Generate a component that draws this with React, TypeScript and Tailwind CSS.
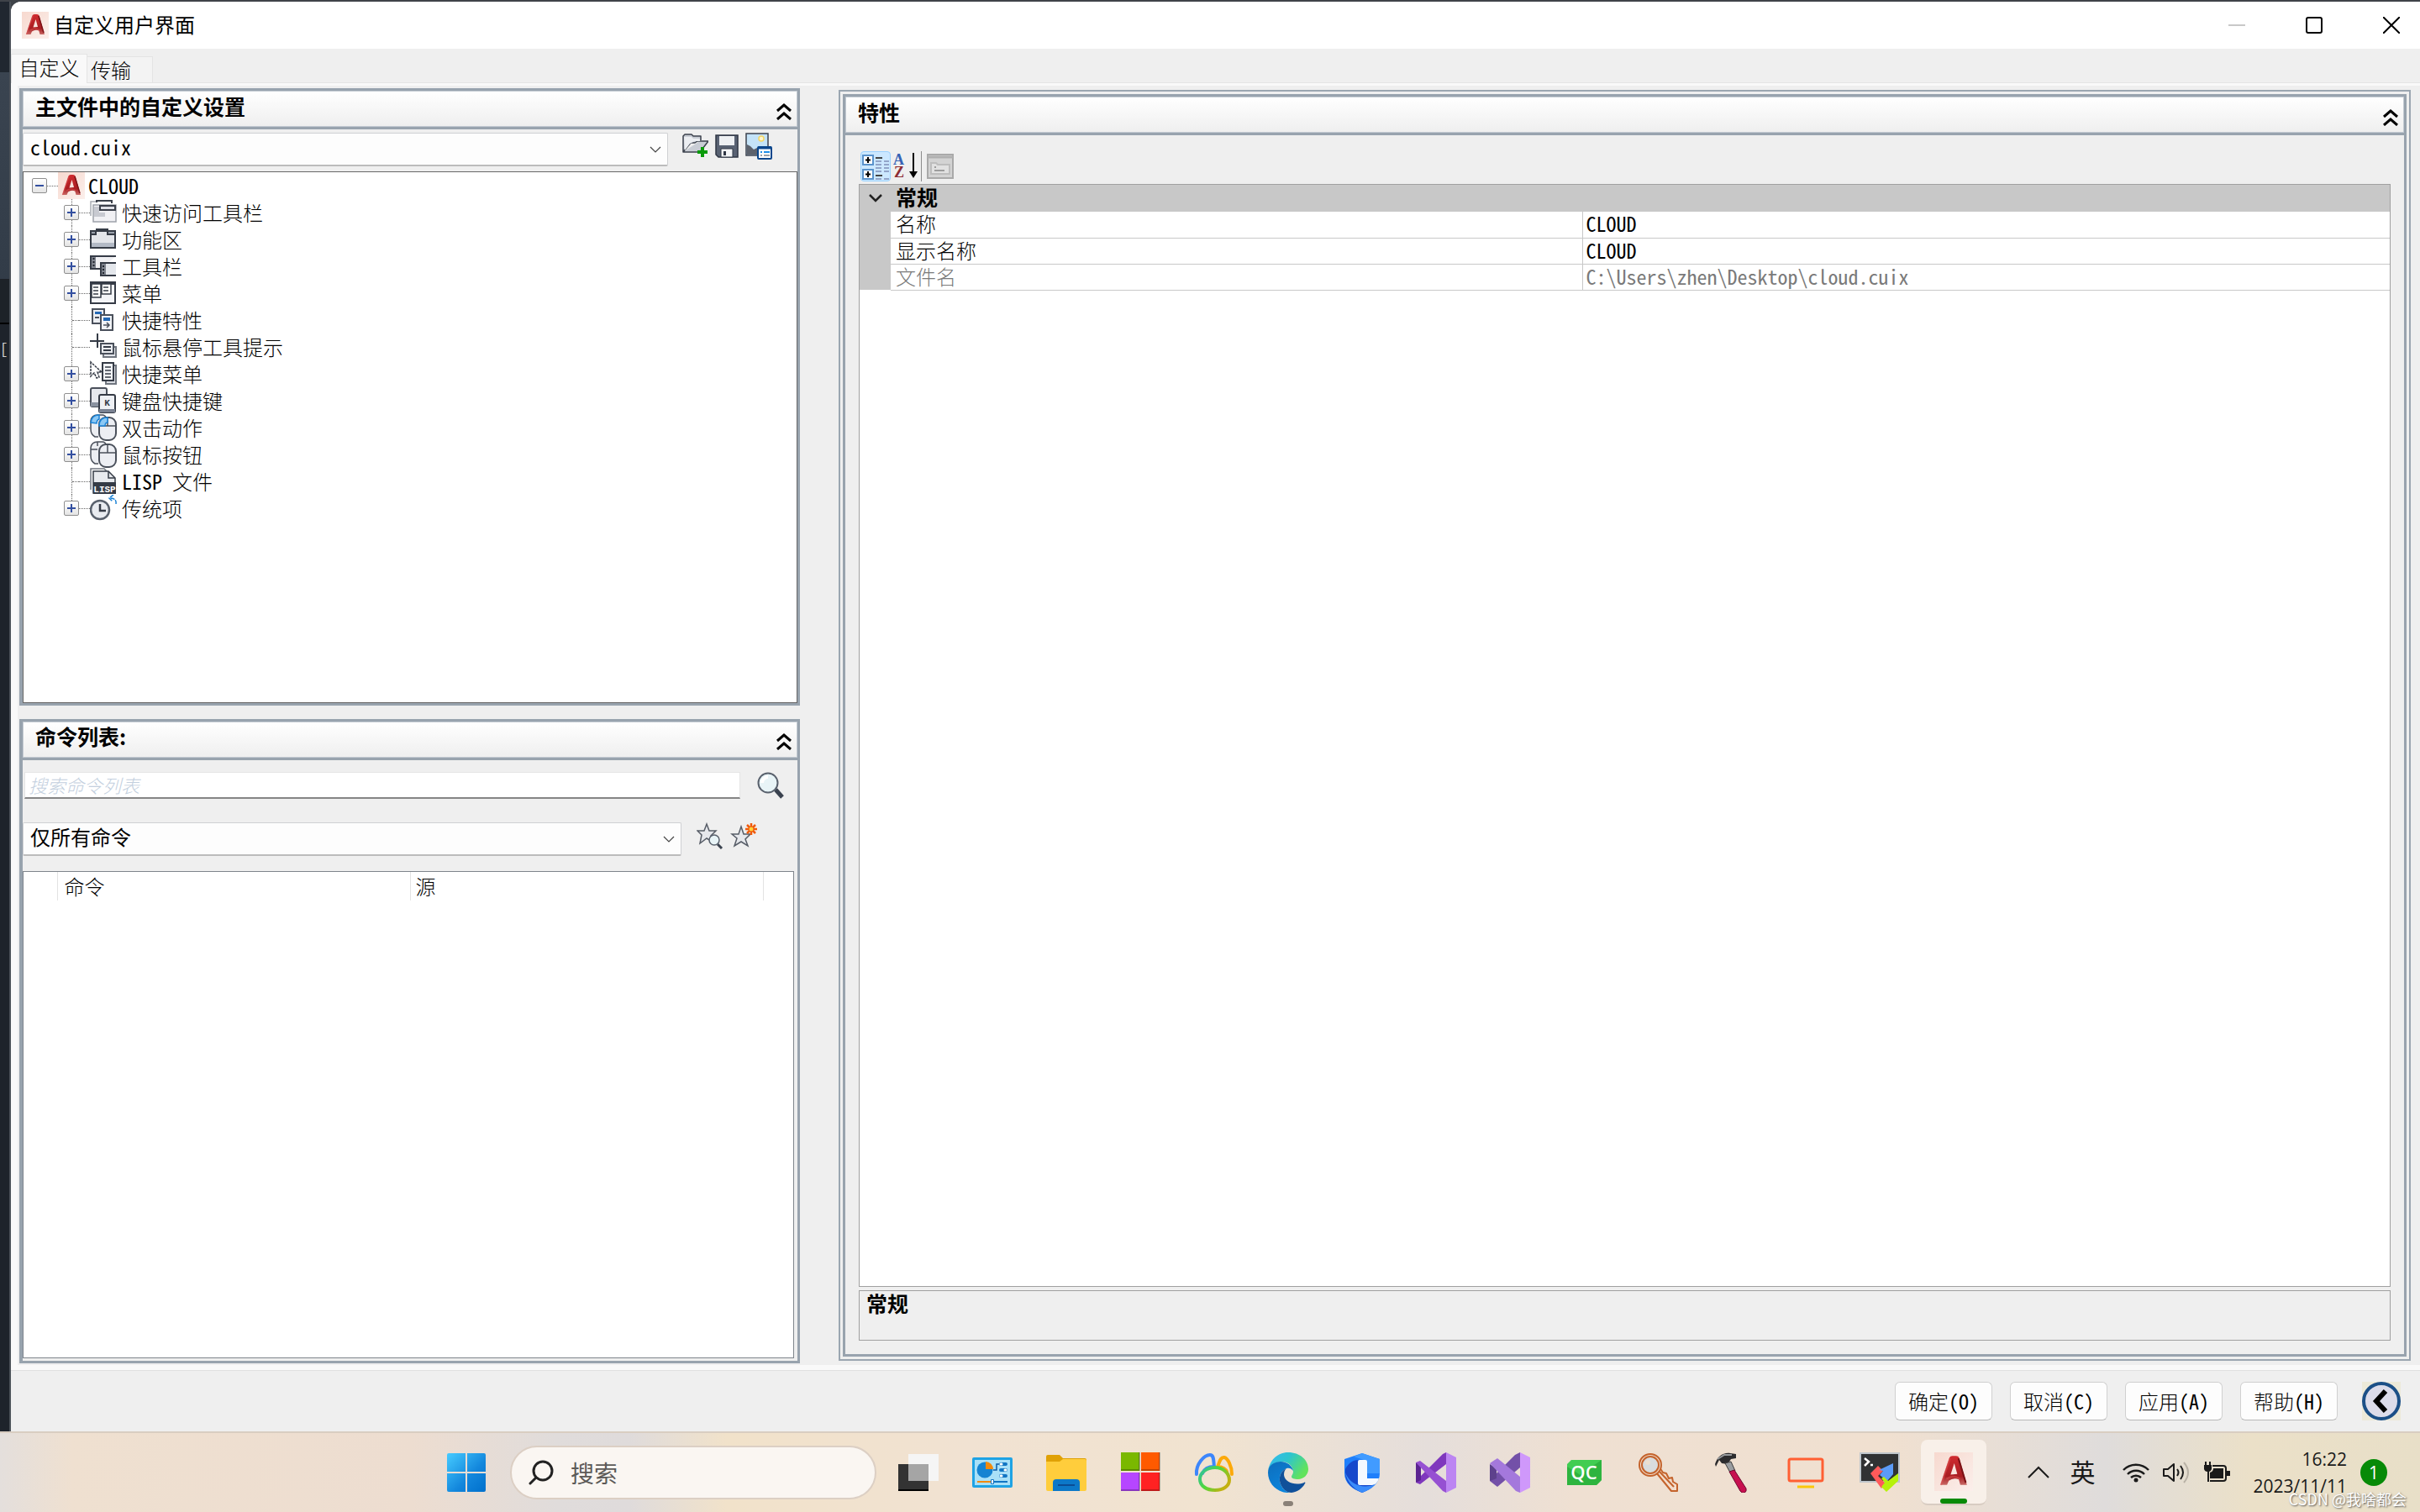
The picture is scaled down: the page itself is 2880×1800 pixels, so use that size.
import { ReactNode, useState } from "react"

type IconProps = { className?: string }

type TreeItemType = {
  name: ReactNode
  icon: ReactNode
  leaf?: boolean
}

type TaskType = {
  name: string
  icon: ReactNode
  running?: boolean
}

const Mono = ({ children }: { children: ReactNode }) => (
  <span className="font-['Noto_Sans_Mono_CJK_SC','Liberation_Mono',monospace] font-normal">{children}</span>
)

/* Logos and small drawings */

const AcadIcon = ({ className = "size-8" }: IconProps) => (
  <svg viewBox="0 0 32 32" className={className}>
    <defs>
      <linearGradient id="acadBg" x1="0" y1="0" x2="1" y2="1">
        <stop offset="0" stopColor="#f7d9cf" />
        <stop offset="1" stopColor="#fbefeb" />
      </linearGradient>
      <linearGradient id="acadRed" x1="0" y1="0" x2="0" y2="1">
        <stop offset="0" stopColor="#d02c30" />
        <stop offset="0.7" stopColor="#a91d22" />
        <stop offset="1" stopColor="#c86a66" />
      </linearGradient>
    </defs>
    <rect width="32" height="32" fill="url(#acadBg)" />
    <path d="M5 27 12.5 4.5Q13 3 15 3h3q2 0 2.500 1.500L27 27h-5.500l-1.200-4.500Q16 20.500 12 23.500L10.500 27Z M13.500 18.500l5.500-.6L16.500 9Z" fill="url(#acadRed)" fillRule="evenodd" />
    <path d="M13 5 5.500 27M10 22q6-4 11 0" stroke="#e0525280" strokeWidth="1.500" fill="none" />
    <path d="m20 5 6 20" stroke="#7c1216" strokeWidth="1.500" fill="none" />
  </svg>
)

const DoubleUp = () => (
  <svg viewBox="0 0 18 20" className="w-[18px] h-5" fill="none" stroke="#000" strokeWidth="3">
    <path d="m1 9 8-7 8 7M1 19l8-7 8 7" />
  </svg>
)

const Chevron = () => (
  <svg viewBox="0 0 14 8" className="w-3.5 h-2" fill="none" stroke="#444" strokeWidth="1.200">
    <path d="m1 1 6 6 6-6" />
  </svg>
)

const FolderAddIcon = () => (
  <svg viewBox="0 0 32 32" className="size-8">
    <path d="M2 23V4l2-2h8l2 2h9v5M2 23h20l10-13H19l-3 2H11Z" fill="#c9cdd5" stroke="#3c424d" strokeWidth="1.500" strokeLinejoin="round" />
    <path d="M3 5h9l2 2h8v3h-6l-6 3-6 8Z" fill="#eceef2" />
    <path d="M25 17v12M19 23h12" stroke="#0a9a0a" strokeWidth="4" />
  </svg>
)

const SaveIcon = () => (
  <svg viewBox="0 0 28 28" className="size-7">
    <path d="M1 1h26v26H4l-3-3Z" fill="#596273" stroke="#2f3644" strokeWidth="1.500" />
    <path d="M5 2h18v11H5Z" fill="#eef0f3" />
    <path d="M7 17h14v10H7Z" fill="#f4f5f7" stroke="#2f3644" />
    <path d="M10 20h3v5h-3Z" fill="#2f3644" />
  </svg>
)

const PictureListIcon = () => (
  <svg viewBox="0 0 32 32" className="size-8">
    <path d="M1 1h26v26H1Z" fill="#c4e3f8" stroke="#3c424d" strokeWidth="1.500" />
    <path d="M2 26V14l4 2 4 4 4-2v8Z" fill="#5c626d" />
    <circle cx="19" cy="7" r="3" fill="#fff6cf" stroke="#f5d765" strokeWidth="1.500" />
    <rect x="15" y="17" width="16" height="14" rx="1" fill="#fff" stroke="#0a468c" strokeWidth="2" />
    <path d="M15 18h16" stroke="#0a468c" strokeWidth="3" />
    <path d="M18 23h2M22 23h7" stroke="#1f8fe8" strokeWidth="2" />
    <path d="M18 27h2M22 27h7" stroke="#9aa1aa" strokeWidth="2" />
  </svg>
)

const GlassIcon = () => (
  <svg viewBox="0 0 32 32" className="size-8">
    <path d="m22 21 8 9" stroke="#3a424f" strokeWidth="5" />
    <circle cx="13" cy="13" r="11.500" fill="#e8f4f7" stroke="#59616d" strokeWidth="2" />
    <path d="M6 13a7 7 0 0 1 7-7" stroke="#fff" strokeWidth="4" fill="none" />
  </svg>
)

const StarFindIcon = () => (
  <svg viewBox="0 0 32 32" className="size-8">
    <path d="m12 2 3 8h8l-6 6 3 8-8-5-8 6 2-10-5-5h8Z" fill="#e6e8ec" stroke="#575d67" strokeWidth="1.500" />
    <path d="m25 26 5 5" stroke="#3a424f" strokeWidth="3" />
    <circle cx="21" cy="21" r="6" fill="#e8f4f7" stroke="#59616d" strokeWidth="1.500" />
  </svg>
)

const StarNewIcon = () => (
  <svg viewBox="0 0 32 32" className="size-8">
    <path d="m13 5 3 9h8l-6 6 3 8-8-5-8 5 3-9-6-5h8Z" fill="#e6e8ec" stroke="#575d67" strokeWidth="1.500" />
    <path d="M25 1v14M18 8h14M20 3l10 10M30 3 20 13" stroke="#f05a0a" strokeWidth="2.500" />
    <circle cx="25" cy="8" r="3" fill="#ffd23a" stroke="#f05a0a" />
  </svg>
)

/* Tree icons, all on a 32 unit grid */

const quickBar = (
  <svg viewBox="0 0 32 32" className="size-8" fill="none">
    <path d="M1 20V3h8" stroke="#a9adb4" strokeWidth="1.500" />
    <path d="M8 4V2h18v3" stroke="#3b404a" strokeWidth="2" />
    <path d="M4 7h27v20H4Z" fill="#f1f1f4" stroke="#9da1a9" strokeWidth="1.500" />
    <path d="M5 9h6v10H5ZM5 16h13v5H5Z" fill="#c8cad1" />
    <path d="M12 8h18v5H12Z" fill="#dfe0e6" stroke="#3b404a" strokeWidth="2" />
  </svg>
)

const ribbon = (
  <svg viewBox="0 0 32 32" className="size-8" fill="none">
    <path d="M1 9V6h7V4h13v2h9v3" fill="#9aa1ac" stroke="#353b46" strokeWidth="2" />
    <path d="M1 10h6V6h14v4h9v16H1Z" fill="#e3e5ea" stroke="#353b46" strokeWidth="2" />
    <path d="M2 20h27v5H2Z" fill="#b3bac6" />
  </svg>
)

const toolbars = (
  <svg viewBox="0 0 32 32" className="size-8" fill="none">
    <path d="M31 4H1v15h12" fill="#f0f0f3" stroke="#353b46" strokeWidth="2" />
    <path d="M2 5h5v13H2ZM13 13h6v14h-6Z" fill="#80858f" />
    <path d="M31 12H13v15h18" stroke="#353b46" strokeWidth="2" />
    <path d="M19 13h12v13H19Z" fill="#e4e7ec" />
    <path d="M4.500 6v11M16 15v11" stroke="#20252e" strokeWidth="2" strokeDasharray="2 2" />
  </svg>
)

const menus = (
  <svg viewBox="0 0 32 32" className="size-8" fill="none">
    <path d="M1 3h29v25H1Z" fill="#f4f5f8" stroke="#353b46" strokeWidth="2" />
    <path d="M1 2h29v4H1Z" fill="#353b46" />
    <path d="M2 5h11v16H2ZM14 5h11v12H14Z" fill="#fff" stroke="#353b46" strokeWidth="1.500" />
    <path d="M4 9h6M4 13h6M4 17h6M16 9h6M16 13h6" stroke="#353b46" strokeWidth="1.500" />
  </svg>
)

const quickProps = (
  <svg viewBox="0 0 32 32" className="size-8" fill="none">
    <path d="M3 3h14v17H3Z" fill="#eceef2" stroke="#4a505b" strokeWidth="2" />
    <path d="M6 6h8v3H6Z" fill="#2468b4" />
    <path d="M6 13h5" stroke="#4a505b" strokeWidth="2" />
    <path d="M13 10h14v18H13Z" fill="#f1f3f6" stroke="#4a505b" strokeWidth="2" />
    <path d="M16 13h8v4h-8Z" fill="#2468b4" />
    <path d="M16 22h7m-3-3 3 3-3 3" stroke="#4a505b" strokeWidth="1.500" />
  </svg>
)

const rollover = (
  <svg viewBox="0 0 32 32" className="size-8" fill="none">
    <path d="M9 0v17M0 9h17" stroke="#353b46" strokeWidth="2" />
    <path d="M16 16h15v12H16Z" fill="#e3e5ea" stroke="#70767f" strokeWidth="2" />
    <path d="M13 12h15v12H13Z" fill="#e9ebef" stroke="#4a505b" strokeWidth="2" />
    <path d="M16 16h9M16 20h9" stroke="#353b46" strokeWidth="2" />
  </svg>
)

const shortcutMenu = (
  <svg viewBox="0 0 32 32" className="size-8" fill="none">
    <path d="M1 2v17l4-4 3 6 3-1-2-6h5Z" fill="#fff" stroke="#353b46" strokeWidth="1.500" strokeDasharray="3 1" />
    <path d="M19 6h12v22H19Z" fill="#d9dce2" stroke="#70767f" strokeWidth="2" />
    <path d="M15 3h13v21H15Z" fill="#f1f3f6" stroke="#353b46" strokeWidth="2" />
    <path d="M18 8h7M18 12h7M18 16h7M18 20h7" stroke="#353b46" strokeWidth="1.500" />
  </svg>
)

const keyboard = (
  <svg viewBox="0 0 32 32" className="size-8" fill="none">
    <rect x="1" y="1" width="19" height="22" rx="2" fill="#e6e8ed" stroke="#4a505b" strokeWidth="2" />
    <path d="M1 18h10v5H1Z" fill="#8a92a0" />
    <rect x="11" y="9" width="19" height="21" rx="2" fill="#eef0f4" stroke="#353b46" strokeWidth="2" />
    <path d="M11 26h19v4H11Z" fill="#7a8292" />
    <text x="20.500" y="22" fontSize="11" fontWeight="700" textAnchor="middle" fill="#353b46" fontFamily="Liberation Mono">K</text>
  </svg>
)

const Mouse = ({ action }: { action?: boolean }) => (
  <svg viewBox="0 0 32 32" className="size-8" fill="none">
    <path d="M10 27H6q-5-3-5-9V8q1-7 8-7h6q3 0 4 3" fill="#eceef2" stroke="#4a505b" strokeWidth="1.500" />
    {action
      ? <path d="M1 10q1-9 10-9v5q-3 1-3 5Z" fill="#8cc8f4" stroke="#1b83d6" strokeWidth="1.500" />
      : <path d="M1 10h8M9 1v5" stroke="#4a505b" strokeWidth="1.500" />}
    <rect x="11" y="4" width="20" height="27" rx="8" fill="#eceef3" stroke="#4a505b" strokeWidth="2" />
    <path d="M11 14h20M21 4v10" stroke="#4a505b" strokeWidth="1.500" />
    {action && <path d="M11 14q0-10 10-10v6q-3 0-3 4Z" fill="#8cc8f4" stroke="#1b83d6" strokeWidth="1.500" />}
  </svg>
)

const lisp = (
  <svg viewBox="0 0 32 32" className="size-8" fill="none">
    <path d="M1 26V1h16l3 3" stroke="#70767f" strokeWidth="1.500" />
    <path d="M4 30V4h18l8 8v18Z" fill="#e8eaee" stroke="#353b46" strokeWidth="1.500" />
    <path d="M22 4v8h8" stroke="#353b46" strokeWidth="1.500" />
    <path d="M4 17h27v14H4Z" fill="#353b46" />
    <text x="17.500" y="29" fontSize="11" fontWeight="700" textAnchor="middle" fill="#fff" fontFamily="Liberation Mono">LISP</text>
  </svg>
)

const legacy = (
  <svg viewBox="0 0 32 32" className="size-8" fill="none">
    <circle cx="12" cy="18" r="11" fill="#e8ebf0" stroke="#59616d" strokeWidth="2.500" />
    <path d="M12 11v8h7" stroke="#353b46" strokeWidth="2.500" />
    <path d="M31 11q1-7-7-7m4-4-5 4 4 4" stroke="#1b83d6" strokeWidth="1.500" strokeDasharray="5 1" />
  </svg>
)

/* Task bar icons, all on a 48 unit grid */

const taskView = (
  <svg viewBox="0 0 48 48" className="size-12">
    <path d="M0 14h36v32H0Z" fill="#333" />
    <path d="M0 44h36v2H0Z" fill="#000" />
    <path d="M12 2h36v32H12Z" fill="#f5f5f5" />
    <path d="M12 14h24v20H12Z" fill="#a5a5a5" />
  </svg>
)

const monitorPanel = (
  <svg viewBox="0 0 48 48" className="size-12">
    <rect y="6" width="48" height="36" rx="2" fill="#1fa3e4" />
    <path d="M3 9h42v30H3Z" fill="#a9e0f8" />
    <circle cx="15" cy="21" r="9.500" fill="#1583d2" />
    <path d="M16 20v-9a9 9 0 0 1 9 9Z" fill="#f28a0c" />
    <path d="M25 21h4v-7h5" stroke="#0a5aa5" strokeWidth="1.500" fill="none" />
    <path d="M34 14h6M34 21h6M34 28h6" stroke="#1275c4" strokeWidth="4" strokeLinecap="round" />
    <path d="M34 14h1M39 21h1M34 28h1" stroke="#fff" strokeWidth="3" strokeLinecap="round" />
    <path d="M6 35h18" stroke="#f28a0c" strokeWidth="2" />
    <path d="M24 35h18" stroke="#1275c4" strokeWidth="2" />
    <path d="M22.500 32.500h3v5h-3Z" fill="#fff" stroke="#1275c4" />
  </svg>
)

const explorer = (
  <svg viewBox="0 0 48 48" className="size-12">
    <path d="M0 5q0-2 2-2h14l4 4h26q2 0 2 2v8H0Z" fill="#e0a106" />
    <path d="M0 11h16l4-3h26q2 0 2 2v34q0 2-2 2H2q-2 0-2-2Z" fill="#ffcd3c" />
    <path d="M8 46V36q0-4 4-4h24q4 0 4 4v10Z" fill="#0c78c8" />
    <path d="M14 39h20" stroke="#0a4c94" strokeWidth="2" />
  </svg>
)

const squares = (
  <svg viewBox="0 0 48 48" className="size-12">
    <path d="M1 0h22v22H1Z" fill="#7ab800" />
    <path d="M25 0h22v22H25Z" fill="#ff5a00" />
    <path d="M1 24h22v22H1Z" fill="#b646ff" />
    <path d="M25 24h22v22H25Z" fill="#ff2222" />
    <path d="M1 21h22V0M25 21h22V0M1 45h22V24M25 45h22V24" stroke="#00000040" strokeWidth="2" fill="none" />
  </svg>
)

const navicat = (
  <svg viewBox="0 0 48 48" className="size-12" fill="none" strokeWidth="4" strokeLinecap="round" strokeLinejoin="round">
    <defs>
      <linearGradient id="navi" x1="0" y1="0" x2="1" y2="0.600">
        <stop offset="0" stopColor="#2fc0a8" />
        <stop offset="0.500" stopColor="#4fd83a" />
        <stop offset="1" stopColor="#c4b010" />
      </linearGradient>
    </defs>
    <path d="M3 26C2 14 12 3 19 3c5 0 4 7 5 14-7 0-12 3-14 8" stroke="#3d86fb" />
    <path d="M45 26c0-10-5-19-9-20-5-1-6 7-8 11 6 0 10 3 11 6" stroke="#fca90a" />
    <path d="M25 18c10 0 17 7 17 15 0 7-7 12-17 12S7 40 7 32s8-14 18-14Z" stroke="url(#navi)" />
  </svg>
)

const edge = (
  <svg viewBox="0 0 48 48" className="size-12">
    <defs>
      <linearGradient id="edgeTop" x1="0" y1="0" x2="1" y2="0.500">
        <stop offset="0" stopColor="#35b8f5" />
        <stop offset="0.500" stopColor="#2fc5cc" />
        <stop offset="1" stopColor="#62e35c" />
      </linearGradient>
      <linearGradient id="edgeLow" x1="0" y1="0" x2="0.500" y2="1">
        <stop offset="0" stopColor="#0e6ebc" />
        <stop offset="1" stopColor="#0a84dc" />
      </linearGradient>
    </defs>
    <path d="M0 22C2 9 12 0 24 0c14 0 24 9 24 20 0 7-6 12-12 12-5 0-8-1-8-3 0-2 2-3 2-6 0-7-6-12-14-12C8 11 2 16 0 22Z" fill="url(#edgeTop)" />
    <path d="M0 24C0 16 7 11 15 11c8 0 14 5 15 11-2-3-5-4-8-3-5 2-9 8-8 15 1 6 5 12 12 14C12 49 0 38 0 24Z" fill="url(#edgeLow)" />
    <path d="M22 19c-5 2-9 8-8 15 1 7 7 14 14 14 7-1 13-5 16-11 1-1 0-2-1-1-10 4-23 0-24-9 0-4 1-6 3-8Z" fill="#10509a" />
  </svg>
)

const shield = (
  <svg viewBox="0 0 48 48" className="size-12">
    <path d="m24 1 21 7v17c0 12-10 19-21 23C13 44 3 37 3 25V8Z" fill="#1f7ffb" />
    <path d="m24 1 21 7v17H26V9L14 5Z" fill="#419bff" />
    <path d="M4 20C8 12 14 9 20 9v29h18c-4 5-9 8-14 10C12 43 4 36 4 25Z" fill="#1648cc" />
    <path d="M4 24c2 11 9 19 20 24 6-2 11-5 14-9-14 4-28 0-34-15Z" fill="#3a8cfa" />
    <path d="M19 11q0-2 2-2h7q2 0 2 2v20h14q-2 7-8 8H21q-2 0-2-2Z" fill="#f4f9ff" />
  </svg>
)

const VisualStudio = ({ preview }: { preview?: boolean }) => (
  <svg viewBox="0 0 48 48" className="size-12">
    <path d={preview ? "m0 34 9 7 27-23V0L30 3 3 30Z" : "m0 36 5 2 31-24V0l-4 2L6 28Z"} fill={preview ? "#7350a8" : "#7f38bd"} />
    <path d={preview ? "M0 14 8 19v12L0 34Z" : "M0 12l6 3v18l-6 3Z"} fill={preview ? "#5d418c" : "#5b2391"} />
    <path d={preview ? "m0 13 9-6 27 22v19l-5-2Z" : "m0 12 5-2 31 24v14l-4-2Z"} fill={preview ? "#a478dc" : "#9650d2"} />
    <path d="m36 0 12 6v36l-12 6Z" fill={preview ? "#cf98fb" : "#bc85f2"} />
  </svg>
)

const qc = (
  <svg viewBox="0 0 48 48" className="size-12">
    <path d="M9 9h36v24l-6 6H4V14Z" fill="#41cd52" />
    <path d="m4 17 35 22H4ZM45 9v24l-6 6-20-12Z" fill="#21a334" opacity="0.600" />
    <text x="24" y="32" fontSize="22" fontWeight="600" textAnchor="middle" fill="#fff" fontFamily="Open Sans">QC</text>
  </svg>
)

const keyIcon = (
  <svg viewBox="0 0 48 48" className="size-12" fill="none" stroke="#c4632c" strokeWidth="2" strokeLinejoin="round">
    <path d="M22 24 40 46h7v-8l-5-3-1-5-4 1-3-6-4-1-4-6Z" fill="#f3ddcc" />
    <ellipse cx="15" cy="15" rx="13" ry="13" fill="#f1dccb" />
    <circle cx="15" cy="15" r="10" fill="#d9dcdd" />
    <path d="m26 23 17 18" />
    <circle cx="12" cy="12" r="3" fill="#ecdfcf" stroke="none" />
  </svg>
)

const hammer = (
  <svg viewBox="0 0 48 48" className="size-12">
    <path d="M4 14C7 5 13 0 22 1l7 1v5l-6 1-4 6-7-1-3-4-4 8Z" fill="#2c2c2e" />
    <path d="m7 8 8-5 9 0" stroke="#96999c" strokeWidth="2" fill="none" />
    <path d="m16 13 7-2 5 11-6 2Z" fill="#9a9da0" stroke="#3b3b3b" />
    <path d="m21 23 6-2 14 22q1 4-2 5t-5-2Z" fill="#c7104f" stroke="#6f0830" />
  </svg>
)

const display = (
  <svg viewBox="0 0 48 48" className="size-12" fill="none">
    <rect x="4" y="8" width="40" height="26" rx="2" stroke="#ff5f33" strokeWidth="3" />
    <path d="M14 41h20" stroke="#fbc80a" strokeWidth="3" />
  </svg>
)

const terminal = (
  <svg viewBox="0 0 48 48" className="size-12">
    <path d="M1 1h46v34H1Z" fill="#303234" stroke="#bfc6cc" strokeWidth="2" />
    <path d="m6 7 5 4-5 5M13 15h3" stroke="#fff" strokeWidth="2.500" fill="none" />
    <path d="m13 25 9-9 6 6-6 6 9 9-5 6Z" fill="#ff5a5a" />
    <path d="m23 21 17-8v13l-7 8-9-7 4-5Z" fill="#5b9bf8" />
    <path d="m34 34 12-9v9L32 47l-6-6 4-5-4-5 3-2Z" fill="#b6f20a" />
  </svg>
)

const treeItems: TreeItemType[] = [
  { name: "快速访问工具栏", icon: quickBar },
  { name: "功能区", icon: ribbon },
  { name: "工具栏", icon: toolbars },
  { name: "菜单", icon: menus },
  { name: "快捷特性", icon: quickProps, leaf: true },
  { name: "鼠标悬停工具提示", icon: rollover, leaf: true },
  { name: "快捷菜单", icon: shortcutMenu },
  { name: "键盘快捷键", icon: keyboard },
  { name: "双击动作", icon: <Mouse action /> },
  { name: "鼠标按钮", icon: <Mouse /> },
  { name: <><Mono>LISP </Mono>文件</>, icon: lisp, leaf: true },
  { name: "传统项", icon: legacy },
]

const tasks: TaskType[] = [
  { name: "任务视图", icon: taskView },
  { name: "控制面板", icon: monitorPanel },
  { name: "文件资源管理器", icon: explorer },
  { name: "方块", icon: squares },
  { name: "Navicat", icon: navicat },
  { name: "Edge", icon: edge, running: true },
  { name: "电脑管家", icon: shield },
  { name: "Visual Studio", icon: <VisualStudio /> },
  { name: "Visual Studio Preview", icon: <VisualStudio preview /> },
  { name: "Qt Creator", icon: qc },
  { name: "密钥", icon: keyIcon },
  { name: "构建", icon: hammer },
  { name: "显示器", icon: display },
  { name: "终端", icon: terminal },
]

const Expander = ({ open }: { open?: boolean }) => (
  <button aria-label={open ? "折叠" : "展开"} className="size-[18px] shrink-0 border border-[#8f8f8f] rounded-xs bg-linear-to-b from-white to-[#e4e4e4] flex items-center justify-center">
    <svg viewBox="0 0 10 10" className="size-2.5" stroke="#3450a0" strokeWidth="2">
      <path d="M0 5h10" />
      {!open && <path d="M5 0v10" />}
    </svg>
  </button>
)

const PanelHeader = ({ title }: { title: ReactNode }) => (
  <div className="h-[46px] shrink-0 border-b-[3px] border-[#98a3ae]">
    <div className="h-[43px] flex items-center justify-between pl-3.5 pr-1.5 border border-[#c3cad2] bg-linear-to-b from-white to-[#efefef]">
      <h2 className="text-[25px] leading-8 font-bold pb-2">{title}</h2>
      <button aria-label="折叠面板" className="pt-1.5"><DoubleUp /></button>
    </div>
  </div>
)

const Combo = ({ label, options, className = "" }: { label: string, options: string[], className?: string }) => (
  <div className={"relative " + className}>
    <select
      aria-label={label}
      className="block w-full h-10 pl-2 pb-2 appearance-none rounded-xs bg-[#fdfdfd] border border-[#cfd0d3] border-b-2 border-b-[#bcbcbc] font-['Noto_Sans_Mono_CJK_SC','Noto_Sans_CJK_SC',monospace] font-normal"
    >
      {options.map((o) => <option key={o}>{o}</option>)}
    </select>
    <span className="absolute right-2 top-4 pointer-events-none"><Chevron /></span>
  </div>
)

const CustomizationPanel = () => (
  <section className="flex-[734_1_0%] flex flex-col border-[3px] border-l-4 border-[#98a3ae]">
    <PanelHeader title="主文件中的自定义设置" />
    <div className="flex items-start pt-1 pb-1.5">
      <Combo label="自定义文件" options={["cloud.cuix"]} className="flex-1" />
      <div className="flex w-[154px] pl-4 gap-2">
        <button aria-label="加载部分自定义文件"><FolderAddIcon /></button>
        <button aria-label="保存"><SaveIcon /></button>
        <button aria-label="图像管理器"><PictureListIcon /></button>
      </div>
    </div>
    <div className="flex-1 bg-white border border-[#666]">
      <div className="flex items-center h-8 pl-2.5">
        <Expander open />
        <span className="w-[13px] border-t border-dotted border-[#666]" />
        <AcadIcon className="size-8 shrink-0" />
        <span className="pl-1"><Mono>CLOUD</Mono></span>
      </div>
      <ul>
        {treeItems.map((t, i) => (
          <li key={i} className="flex items-center h-8 pl-12">
            {t.leaf ? (
              <span className="w-[18px] h-8 pl-[9px] flex">
                <span className="flex-1 h-8 flex items-center border-l border-dotted border-[#666]">
                  <span className="w-full border-t border-dotted border-[#666]" />
                </span>
              </span>
            ) : (
              <span className="w-[18px] h-8 flex flex-col items-center">
                <span className="flex-1 border-l border-dotted border-[#666]" />
                <Expander />
                <span className={"flex-1 border-l border-dotted " + (i === treeItems.length - 1 ? "border-transparent" : "border-[#666]")} />
              </span>
            )}
            <span className="w-[13px] border-t border-dotted border-[#666]" />
            {t.icon}
            <span className="pl-1.5">{t.name}</span>
          </li>
        ))}
      </ul>
    </div>
  </section>
)

const CommandPanel = () => {
  const [query, setQuery] = useState("")

  return (
    <section className="flex-[767_1_0%] flex flex-col border-[3px] border-l-4 border-[#98a3ae]">
      <PanelHeader title="命令列表:" />
      <div className="flex items-center pt-3.5 pl-0.5 pr-4">
        <input
          value={query}
          onChange={(e) => setQuery(e.target.value)}
          aria-label="搜索命令列表"
          placeholder="搜索命令列表"
          className="flex-1 min-w-0 h-8 pl-1 text-[22px] bg-white border border-[#e5e5e5] border-b-2 border-b-[#858585] placeholder:italic placeholder:text-[#c3cfde]"
        />
        <button aria-label="搜索" className="pl-5"><GlassIcon /></button>
      </div>
      <div className="flex items-center pt-7 pb-[18px]">
        <Combo label="命令过滤" options={["仅所有命令"]} className="flex-1" />
        <div className="flex w-[138px] pl-[18px] gap-2 pb-2">
          <button aria-label="查找收藏"><StarFindIcon /></button>
          <button aria-label="新建命令"><StarNewIcon /></button>
        </div>
      </div>
      <div className="flex-1 mr-1 mb-[3px] bg-white border border-[#7f858c]">
        <table className="w-full table-fixed text-left">
          <thead>
            <tr className="h-[34px]">
              <th className="w-10 border-r border-[#e3e3e3]" />
              <th className="font-light pl-2 leading-8 border-r border-[#e3e3e3]">命令</th>
              <th className="font-light pl-1.5 leading-8 border-r border-[#e3e3e3]">源</th>
              <th className="w-9" />
            </tr>
          </thead>
        </table>
      </div>
    </section>
  )
}

const PropertyRow = ({ name, value, first, readOnly }: { name: string, value: string, first?: boolean, readOnly?: boolean }) => (
  <tr className={"h-[31px] " + (readOnly ? "text-[#7a7a7a]" : "")}>
    {first && <td rowSpan={3} className="bg-[#c8c8c8]" />}
    <th className="p-0 font-light border-r border-b border-[#c8c8c8]">
      <div className="h-[30px] pl-1.5 leading-7">{name}</div>
    </th>
    <td className="p-0 border-b border-[#c8c8c8]">
      <div className="h-[30px] pl-1 leading-7"><Mono>{value}</Mono></div>
    </td>
  </tr>
)

const PropertiesPanel = () => (
  <section className="mt-0.5 mb-[3px] p-[3px] flex border-2 border-[#9ba6b1]">
    <div className="flex-1 flex flex-col border-[3px] border-[#98a3ae]">
      <PanelHeader title="特性" />
      <div className="flex-1 flex flex-col px-4 pt-4 pb-4">
        <div className="flex items-center h-[41px] pl-0.5">
          <button aria-label="按分类" className="w-9 h-9 rounded-sm bg-[#cce8ff] border border-[#99d1ff] flex items-center justify-center">
            <svg viewBox="0 0 32 32" className="size-8" fill="none">
              <path d="M1 3h12v11H1ZM1 20h12v11H1Z" fill="#fff" stroke="#5a93cc" strokeWidth="2" />
              <path d="M7 5v7M4 8.500h6M7 22v7M4 25.500h6" stroke="#000" strokeWidth="2" />
              <path d="M16 6h8M16 27h8" stroke="#444" strokeWidth="2" />
              <path d="M16 10h7M16 14h7M16 18h7M16 22h7M26 10h6M26 14h6M26 18h6M26 22h6M16 31h7M26 31h6" stroke="#7f8fb8" strokeWidth="1.500" />
            </svg>
          </button>
          <button aria-label="按字母" className="pl-0.5">
            <svg viewBox="0 0 32 36" className="w-8 h-9" fill="none">
              <text x="1" y="16" fontSize="18" fontWeight="700" fill="#3662b5" fontFamily="Liberation Serif">A</text>
              <text x="2" y="31" fontSize="18" fontWeight="700" fill="#8d2c34" fontFamily="Liberation Serif">Z</text>
              <path d="M25 2v24" stroke="#000" strokeWidth="2" />
              <path d="M20 24h10l-5 8Z" fill="#000" />
            </svg>
          </button>
          <span className="w-px h-9 bg-[#8c8c8c] ml-0.5 mr-1.5" />
          <button aria-label="属性页">
            <svg viewBox="0 0 32 32" className="size-8" fill="none">
              <path d="M1 2h30v28H1Z" fill="#d3d3d3" stroke="#a9a9a9" strokeWidth="2" />
              <path d="M1 5h30" stroke="#b0b0b0" strokeWidth="3" />
              <path d="M5 12h6l2 2h14v11H5Z" fill="#e1e1e1" stroke="#bdbdbd" strokeWidth="2" />
              <path d="M9 17h2M9 21h12" stroke="#9d9d9d" strokeWidth="2" />
            </svg>
          </button>
        </div>
        <div className="flex-1 mt-px bg-white border border-[#a0a0a0]">
          <table className="w-full table-fixed text-left">
            <colgroup>
              <col className="w-[37px]" />
              <col className="w-[45.2%]" />
              <col />
            </colgroup>
            <tbody>
              <tr className="h-8 bg-[#c8c8c8]">
                <td className="p-0">
                  <button aria-label="折叠分类" className="block mx-auto">
                    <svg viewBox="0 0 16 10" className="w-4 h-2.5" fill="none" stroke="#222" strokeWidth="2.500"><path d="m1 1 7 7 7-7" /></svg>
                  </button>
                </td>
                <th colSpan={2} className="p-0 font-bold"><div className="h-8 pl-1.5 text-[25px] leading-7">常规</div></th>
              </tr>
              <PropertyRow name="名称" value="CLOUD" first />
              <PropertyRow name="显示名称" value="CLOUD" />
              <PropertyRow name="文件名" value="C:\Users\zhen\Desktop\cloud.cuix" readOnly />
            </tbody>
          </table>
        </div>
        <div className="h-[60px] mt-1 pl-2 border border-[#a0a0a0] text-[25px] leading-7 font-bold">常规</div>
      </div>
    </div>
  </section>
)

const Taskbar = () => (
  <footer className="relative h-24 grid grid-cols-[1fr_auto_1fr] border-t-2 border-[#d9cdc1] bg-[linear-gradient(90deg,#e4dfdc_0%,#efe0d0_3%,#edddd0_17%,#e0dcdb_23%,#dfdbdb_26%,#f1e2ca_30%,#f1e2d2_40%,#f1e3d0_50%,#e5dedb_59%,#efe0d2_65%,#f0e0d0_78%,#dfdcdb_87%,#ebe0c8_93%,#e8dfc8_100%)]">
    <div />
    <div className="flex items-center">
      <button aria-label="开始" className="w-[88px] flex justify-center">
        <svg viewBox="0 0 46 46" className="size-[46px]">
          <defs>
            <linearGradient id="win" x1="0" y1="0" x2="1" y2="1">
              <stop offset="0" stopColor="#46cbff" />
              <stop offset="0.600" stopColor="#1286dc" />
              <stop offset="1" stopColor="#0070cc" />
            </linearGradient>
          </defs>
          <path d="M2 0h20v22H0V2q0-2 2-2ZM24 0h20q2 0 2 2v20H24ZM0 24h22v22H2q-2 0-2-2ZM24 24h22v20q0 2-2 2H24Z" fill="url(#win)" />
        </svg>
      </button>
      <label className="w-[436px] h-16 ml-2 mr-1.5 pl-5 flex items-center gap-5 rounded-full bg-[#faf6f2] border-2 border-[#dccfc4]">
        <svg viewBox="0 0 30 30" className="size-[30px] shrink-0" fill="none" stroke="#222" strokeWidth="3" strokeLinecap="round">
          <circle cx="17" cy="13" r="11" />
          <path d="m9 21-7 7" />
        </svg>
        <input aria-label="搜索" placeholder="搜索" className="flex-1 min-w-0 text-[28px] font-normal outline-none placeholder:text-[#5c5a58]" />
      </label>
      {tasks.map((t) => (
        <button key={t.name} aria-label={t.name} className="relative w-[88px] h-20 flex items-center justify-center">
          {t.icon}
          {t.running && <span className="absolute bottom-0 w-3 h-1.5 rounded-full bg-[#8a8178]" />}
        </button>
      ))}
      <button aria-label="AutoCAD" className="relative w-[78px] h-[78px] mx-[5px] flex items-center justify-center rounded-lg bg-[#f8f0e9] border-b-2 border-[#d8ccc2]">
        <AcadIcon className="size-[46px]" />
        <span className="absolute bottom-0 w-8 h-1.5 rounded-full bg-[#078a07]" />
      </button>
    </div>
    <div className="flex items-center justify-end pr-[39px] text-[#1a1a1a] font-['Open_Sans','Noto_Sans_CJK_SC',sans-serif] font-normal">
      <button aria-label="显示隐藏的图标" className="mr-6">
        <svg viewBox="0 0 28 16" className="w-7 h-4" fill="none" stroke="currentColor" strokeWidth="2"><path d="m2 14 12-12 12 12" /></svg>
      </button>
      <button className="text-[30px] leading-9 mr-8">英</button>
      <svg viewBox="0 0 32 24" className="w-8 h-6 mr-4" fill="none" stroke="currentColor" strokeWidth="2.500">
        <path d="M1 9a21 21 0 0 1 30 0M6 14a14 14 0 0 1 20 0M10 18a9 9 0 0 1 12 0" />
        <circle cx="16" cy="21" r="2.500" fill="currentColor" stroke="none" />
      </svg>
      <svg viewBox="0 0 32 26" className="w-8 h-[26px] mr-4" fill="none" stroke="currentColor" strokeWidth="2">
        <path d="M1 9h5l7-6v20l-7-6H1Z" strokeLinejoin="round" />
        <path d="M17 9q3 4 0 8M21 5q6 8 0 16" />
        <path d="M25 1q10 12 0 24" stroke="#b9b2a6" />
      </svg>
      <svg viewBox="0 0 32 26" className="w-8 h-[26px] mr-7" fill="none" stroke="currentColor" strokeWidth="2">
        <path d="M11 5h13q3 0 3 3v12q0 3-3 3H8" />
        <path d="M12 8h12v12H8v-7q4-1 4-5ZM28 11h4v6h-4ZM1 4h9v5q-1 3-3 3v12H5V12q-3 0-4-3Z" fill="currentColor" stroke="none" />
        <path d="M3 0v5M8 0v5" />
      </svg>
      <div className="text-right text-[21px] leading-8">
        <p>16:22</p>
        <p>2023/11/11</p>
      </div>
      <span className="size-8 ml-4 rounded-full bg-[#078a07] text-white text-[21px] leading-8 text-center">1</span>
    </div>
    <span className="absolute right-4 bottom-1 text-lg leading-6 font-normal text-white [text-shadow:1px_1px_2px_#555]">CSDN @我啥都会</span>
  </footer>
)

const App = () => {
  return (
    <div className="min-h-screen flex flex-col bg-[#3f4349] text-black text-2xl leading-8 font-light font-['Noto_Sans_CJK_SC',sans-serif]">
      <div className="flex-1 flex pt-0.5">
        {/* Edge of the drawing window behind the dialog */}
        <div className="w-[13px] shrink-0 flex flex-col border-r-2 border-[#4b5158] bg-[#1e232b]">
          <div className="h-[84px] bg-[#202730]" />
          <div className="h-[246px] bg-linear-to-b from-[#3a4450] to-[#323c48]" />
          <div className="h-[54px] bg-[#1d2228] border-b-2 border-black" />
          <div className="pt-3 text-lg leading-8 text-[#d5d5d5]"><Mono>[</Mono></div>
        </div>
        <div className="flex-1 min-w-0 flex flex-col rounded-tl-xl bg-[#efefef]">
          <header className="h-14 flex items-center justify-between pl-[13px] pr-0 bg-white rounded-tl-xl">
            <div className="flex items-center gap-1.5">
              <AcadIcon />
              <h1 className="font-normal pb-0.5">自定义用户界面</h1>
            </div>
            <div className="flex gap-6">
              <button aria-label="最小化" className="w-[68px] h-14 flex items-center justify-center">
                <svg viewBox="0 0 20 20" className="size-5"><path d="M0 10h20" stroke="#c8c8c8" strokeWidth="2" /></svg>
              </button>
              <button aria-label="最大化" className="w-[68px] h-14 flex items-center justify-center">
                <svg viewBox="0 0 20 20" className="size-5"><rect x="1" y="1" width="18" height="18" rx="2" fill="none" stroke="#000" strokeWidth="2" /></svg>
              </button>
              <button aria-label="关闭" className="w-[68px] h-14 flex items-center justify-center">
                <svg viewBox="0 0 20 20" className="size-5"><path d="m0 0 20 20M20 0 0 20" stroke="#000" strokeWidth="2" /></svg>
              </button>
            </div>
          </header>
          <nav className="h-[41px] shrink-0 flex items-end border-b border-[#e4e4e4]">
            <button className="w-[91px] h-[35px] -mb-px pb-1 leading-[30px] bg-[#f9f9f9] border border-b-0 border-[#e4e4e4]">自定义</button>
            <button className="w-[78px] h-[31px] pl-1 leading-[30px] text-left bg-[#f3f3f3] border border-l-0 border-b-0 border-[#e4e4e4]">传输</button>
          </nav>
          <main className="flex-1 grid grid-cols-[929fr_1871fr] gap-[46px] border-t-[3px] border-l-8 border-b-[6px] border-[#f9f9f9] pl-0.5 pr-[11px] pt-[3px] pb-0.5">
            <div className="flex flex-col gap-4">
              <CustomizationPanel />
              <CommandPanel />
            </div>
            <PropertiesPanel />
          </main>
          <div className="h-[73px] flex items-center justify-end gap-[21px] pr-[23px] border-t border-[#e0e0e0]">
            {[["确定", "(O)"], ["取消", "(C)"], ["应用", "(A)"], ["帮助", "(H)"]].map(([name, key]) => (
              <button key={name} className="w-[116px] h-[46px] rounded-md bg-[#fdfdfd] border border-[#d0d0d0] border-b-[#b8b8b8]">{name}<Mono>{key}</Mono></button>
            ))}
            <button aria-label="收起" className="ml-2 bg-[#ece9d8]">
              <svg viewBox="0 0 46 46" className="size-[46px]">
                <circle cx="23" cy="23" r="21" fill="#dcdcea" stroke="#1b4f87" strokeWidth="4" />
                <path d="m28 11-11 12 11 12" fill="none" stroke="#000" strokeWidth="6" />
              </svg>
            </button>
          </div>
        </div>
      </div>
      <Taskbar />
    </div>
  )
}

export default App
